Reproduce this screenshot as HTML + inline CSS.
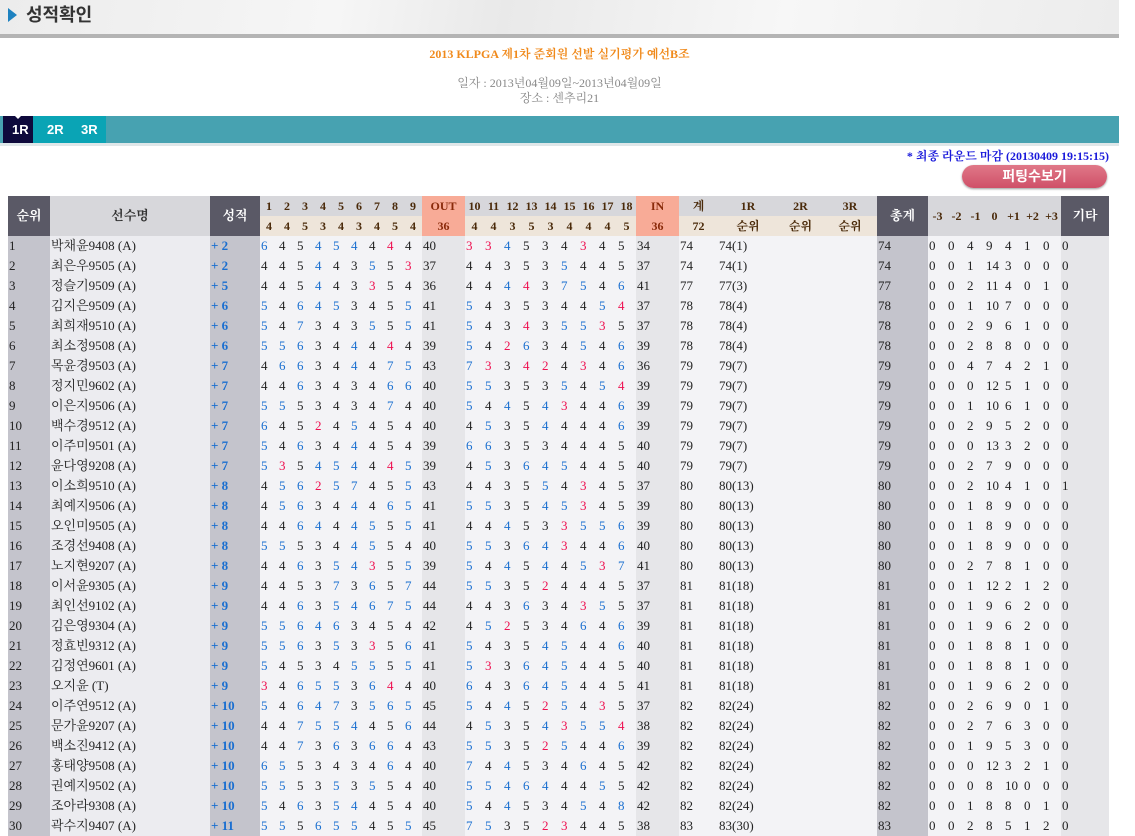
<!DOCTYPE html>
<html><head><meta charset="utf-8">
<style>
body{margin:0;width:1135px;height:836px;overflow:hidden;background:#fff;font-family:"Liberation Serif","Noto Serif CJK SC",serif;}
.top{position:absolute;left:0;top:0;width:1119px;height:34px;background:linear-gradient(100deg,#ececec 0%,#f6f6f6 30%,#e9e9e9 45%,#f7f7f7 70%,#ececec 100%);border-bottom:4px solid #b4b4b4;}
.top h1{position:absolute;left:26px;top:1px;margin:0;font:bold 18px "Liberation Sans","Noto Sans CJK KR",sans-serif;color:#333;}
.arrow{position:absolute;left:8px;top:8px;width:0;height:0;border-top:7px solid transparent;border-bottom:7px solid transparent;border-left:9px solid #1e82c0;}
.t1{position:absolute;left:0;width:1119px;top:45px;text-align:center;color:#f08a1c;font:bold 12px "Liberation Serif","Noto Serif CJK SC",serif;}
.t2{position:absolute;left:0;width:1119px;top:76px;text-align:center;color:#888;font:12px/15px "Liberation Serif","Noto Serif CJK SC",serif;}
.tabs{position:absolute;left:0;top:116px;width:1119px;height:27px;background:#47a2b1;border-bottom:3px solid #dfe7e9;}
.tabs .seg{position:absolute;left:33px;top:0;width:73px;height:27px;background:#0aa4b5;}
.tabs .on{position:absolute;left:3px;top:0;width:30px;height:27px;background:#0e0a3c;}
.tabs span{position:absolute;top:6px;color:#fff;font:bold 13px "Liberation Sans",sans-serif;}
.tabs .tri{position:absolute;left:14px;top:-1px;border-left:4px solid transparent;border-right:4px solid transparent;border-top:4px solid #fff;}
.note{position:absolute;right:26px;top:147px;color:#1a1adb;font:bold 12px "Liberation Serif","Noto Serif CJK SC",serif;}
.btn{position:absolute;left:962px;top:165px;width:145px;height:23px;border-radius:12px;background:linear-gradient(#e07888,#cf5068);box-shadow:0 1px 2px #999;color:#fff;text-align:center;font:bold 14px/23px "Liberation Sans","Noto Sans CJK KR",sans-serif;}
table{position:absolute;left:8px;top:196px;border-collapse:collapse;table-layout:fixed;width:1101px;font-size:13px;}
td,th{padding:0 0 0 1px;height:20px;white-space:nowrap;overflow:hidden;text-align:left;color:#222;line-height:18px;}
th{font-weight:bold;text-align:center;padding:0;color:#4a2a0a;font-size:12px;}
th.d{background:#5a5966;color:#fff;font-family:"Liberation Serif","Noto Serif CJK SC",serif;font-size:13px;}
th.g{background:#d7d7db;color:#333;font-family:"Liberation Serif","Noto Serif CJK SC",serif;font-size:13px;font-weight:bold;}
th.h{background:#d7d7db;}
th.p{background:#eee5da;}
th.o{background:#f8ab97;color:#8a2a0a;}
th.k{font-family:"Liberation Serif","Noto Serif CJK SC",serif;}
.c1{background:#c4c4cc}.c2{background:#ececf0}.c4{background:#f3f3f6}.c5{background:#e6e6e9}
td.s{color:#1a6fd0;font-weight:bold;font-family:"Liberation Serif",serif;}
td.n{font-family:"Liberation Serif","Noto Serif CJK SC",serif;}
.b{color:#1a6fd0}.r{color:#ee1050}
</style></head><body>
<div class="top"><div class="arrow"></div><h1>성적확인</h1></div>
<div class="t1">2013 KLPGA 제1차 준회원 선발 실기평가 예선B조</div>
<div class="t2">일자 : 2013년04월09일~2013년04월09일<br>장소 : 센추리21</div>
<div class="tabs"><div class="seg"></div><div class="on"></div><div class="tri"></div><span style="left:12px">1R</span><span style="left:47px">2R</span><span style="left:81px">3R</span></div>
<div class="note">* 최종 라운드 마감 (20130409 19:15:15)</div>
<div class="btn">퍼팅수보기</div>
<table>
<colgroup>
<col class="c1" style="width:42px"><col class="c2" style="width:160px"><col class="c1" style="width:50px">
<col class="c4" span="9" style="width:18px"><col class="c5" style="width:43px">
<col class="c4" span="9" style="width:19px"><col class="c5" style="width:43px">
<col class="c4" style="width:39px"><col class="c4" style="width:60px"><col class="c4" style="width:45px"><col class="c4" style="width:54px">
<col class="c1" style="width:51px"><col class="c4" span="7" style="width:19px"><col class="c5" style="width:48px">
</colgroup>
<tr><th class="d" rowspan="2">순위</th><th class="g" rowspan="2">선수명</th><th class="d" rowspan="2">성적</th>
<th class="h">1</th><th class="h">2</th><th class="h">3</th><th class="h">4</th><th class="h">5</th><th class="h">6</th><th class="h">7</th><th class="h">8</th><th class="h">9</th><th class="o">OUT</th>
<th class="h">10</th><th class="h">11</th><th class="h">12</th><th class="h">13</th><th class="h">14</th><th class="h">15</th><th class="h">16</th><th class="h">17</th><th class="h">18</th><th class="o">IN</th>
<th class="h k">계</th><th class="h">1R</th><th class="h">2R</th><th class="h">3R</th><th class="d" rowspan="2">총계</th>
<th class="h" rowspan="2">-3</th><th class="h" rowspan="2">-2</th><th class="h" rowspan="2">-1</th><th class="h" rowspan="2">0</th><th class="h" rowspan="2">+1</th><th class="h" rowspan="2">+2</th><th class="h" rowspan="2">+3</th><th class="d" rowspan="2">기타</th></tr>
<tr><th class="p">4</th><th class="p">4</th><th class="p">5</th><th class="p">3</th><th class="p">4</th><th class="p">3</th><th class="p">4</th><th class="p">5</th><th class="p">4</th><th class="o">36</th>
<th class="p">4</th><th class="p">4</th><th class="p">3</th><th class="p">5</th><th class="p">3</th><th class="p">4</th><th class="p">4</th><th class="p">4</th><th class="p">5</th><th class="o">36</th>
<th class="p">72</th><th class="p k">순위</th><th class="p k">순위</th><th class="p k">순위</th></tr>
<tr><td>1<td class=n>박채윤9408 (A)<td class=s>+ 2<td class=b>6<td>4<td>5<td class=b>4<td class=b>5<td class=b>4<td>4<td class=r>4<td>4<td>40<td class=r>3<td class=r>3<td class=b>4<td>5<td>3<td>4<td class=r>3<td>4<td>5<td>34<td>74<td>74(1)<td><td><td>74<td>0<td>0<td>4<td>9<td>4<td>1<td>0<td>0</tr>
<tr><td>2<td class=n>최은우9505 (A)<td class=s>+ 2<td>4<td>4<td>5<td class=b>4<td>4<td>3<td class=b>5<td>5<td class=r>3<td>37<td>4<td>4<td>3<td>5<td>3<td class=b>5<td>4<td>4<td>5<td>37<td>74<td>74(1)<td><td><td>74<td>0<td>0<td>1<td>14<td>3<td>0<td>0<td>0</tr>
<tr><td>3<td class=n>정슬기9509 (A)<td class=s>+ 5<td>4<td>4<td>5<td class=b>4<td>4<td>3<td class=r>3<td>5<td>4<td>36<td>4<td>4<td class=b>4<td class=r>4<td>3<td class=b>7<td class=b>5<td>4<td class=b>6<td>41<td>77<td>77(3)<td><td><td>77<td>0<td>0<td>2<td>11<td>4<td>0<td>1<td>0</tr>
<tr><td>4<td class=n>김지은9509 (A)<td class=s>+ 6<td class=b>5<td>4<td class=b>6<td class=b>4<td class=b>5<td>3<td>4<td>5<td class=b>5<td>41<td class=b>5<td>4<td>3<td>5<td>3<td>4<td>4<td class=b>5<td class=r>4<td>37<td>78<td>78(4)<td><td><td>78<td>0<td>0<td>1<td>10<td>7<td>0<td>0<td>0</tr>
<tr><td>5<td class=n>최희재9510 (A)<td class=s>+ 6<td class=b>5<td>4<td class=b>7<td>3<td>4<td>3<td class=b>5<td>5<td class=b>5<td>41<td class=b>5<td>4<td>3<td class=r>4<td>3<td class=b>5<td class=b>5<td class=r>3<td>5<td>37<td>78<td>78(4)<td><td><td>78<td>0<td>0<td>2<td>9<td>6<td>1<td>0<td>0</tr>
<tr><td>6<td class=n>최소정9508 (A)<td class=s>+ 6<td class=b>5<td class=b>5<td class=b>6<td>3<td>4<td class=b>4<td>4<td class=r>4<td>4<td>39<td class=b>5<td>4<td class=r>2<td class=b>6<td>3<td>4<td class=b>5<td>4<td class=b>6<td>39<td>78<td>78(4)<td><td><td>78<td>0<td>0<td>2<td>8<td>8<td>0<td>0<td>0</tr>
<tr><td>7<td class=n>목윤경9503 (A)<td class=s>+ 7<td>4<td class=b>6<td class=b>6<td>3<td>4<td class=b>4<td>4<td class=b>7<td class=b>5<td>43<td class=b>7<td class=r>3<td>3<td class=r>4<td class=r>2<td>4<td class=r>3<td>4<td class=b>6<td>36<td>79<td>79(7)<td><td><td>79<td>0<td>0<td>4<td>7<td>4<td>2<td>1<td>0</tr>
<tr><td>8<td class=n>정지민9602 (A)<td class=s>+ 7<td>4<td>4<td class=b>6<td>3<td>4<td>3<td>4<td class=b>6<td class=b>6<td>40<td class=b>5<td class=b>5<td>3<td>5<td>3<td class=b>5<td>4<td class=b>5<td class=r>4<td>39<td>79<td>79(7)<td><td><td>79<td>0<td>0<td>0<td>12<td>5<td>1<td>0<td>0</tr>
<tr><td>9<td class=n>이은지9506 (A)<td class=s>+ 7<td class=b>5<td class=b>5<td>5<td>3<td>4<td>3<td>4<td class=b>7<td>4<td>40<td class=b>5<td>4<td class=b>4<td>5<td class=b>4<td class=r>3<td>4<td>4<td class=b>6<td>39<td>79<td>79(7)<td><td><td>79<td>0<td>0<td>1<td>10<td>6<td>1<td>0<td>0</tr>
<tr><td>10<td class=n>백수경9512 (A)<td class=s>+ 7<td class=b>6<td>4<td>5<td class=r>2<td>4<td class=b>5<td>4<td>5<td>4<td>40<td>4<td class=b>5<td>3<td>5<td class=b>4<td>4<td>4<td>4<td class=b>6<td>39<td>79<td>79(7)<td><td><td>79<td>0<td>0<td>2<td>9<td>5<td>2<td>0<td>0</tr>
<tr><td>11<td class=n>이주미9501 (A)<td class=s>+ 7<td class=b>5<td>4<td class=b>6<td>3<td>4<td class=b>4<td>4<td>5<td>4<td>39<td class=b>6<td class=b>6<td>3<td>5<td>3<td>4<td>4<td>4<td>5<td>40<td>79<td>79(7)<td><td><td>79<td>0<td>0<td>0<td>13<td>3<td>2<td>0<td>0</tr>
<tr><td>12<td class=n>윤다영9208 (A)<td class=s>+ 7<td class=b>5<td class=r>3<td>5<td class=b>4<td class=b>5<td class=b>4<td>4<td class=r>4<td class=b>5<td>39<td>4<td class=b>5<td>3<td class=b>6<td class=b>4<td class=b>5<td>4<td>4<td>5<td>40<td>79<td>79(7)<td><td><td>79<td>0<td>0<td>2<td>7<td>9<td>0<td>0<td>0</tr>
<tr><td>13<td class=n>이소희9510 (A)<td class=s>+ 8<td>4<td class=b>5<td class=b>6<td class=r>2<td class=b>5<td class=b>7<td>4<td>5<td class=b>5<td>43<td>4<td>4<td>3<td>5<td class=b>5<td>4<td class=r>3<td>4<td>5<td>37<td>80<td>80(13)<td><td><td>80<td>0<td>0<td>2<td>10<td>4<td>1<td>0<td>1</tr>
<tr><td>14<td class=n>최예지9506 (A)<td class=s>+ 8<td>4<td class=b>5<td class=b>6<td>3<td>4<td class=b>4<td>4<td class=b>6<td class=b>5<td>41<td class=b>5<td class=b>5<td>3<td>5<td class=b>4<td class=b>5<td class=r>3<td>4<td>5<td>39<td>80<td>80(13)<td><td><td>80<td>0<td>0<td>1<td>8<td>9<td>0<td>0<td>0</tr>
<tr><td>15<td class=n>오인미9505 (A)<td class=s>+ 8<td>4<td>4<td class=b>6<td class=b>4<td>4<td class=b>4<td class=b>5<td>5<td class=b>5<td>41<td>4<td>4<td class=b>4<td>5<td>3<td class=r>3<td class=b>5<td class=b>5<td class=b>6<td>39<td>80<td>80(13)<td><td><td>80<td>0<td>0<td>1<td>8<td>9<td>0<td>0<td>0</tr>
<tr><td>16<td class=n>조경선9408 (A)<td class=s>+ 8<td class=b>5<td class=b>5<td>5<td>3<td>4<td class=b>4<td class=b>5<td>5<td>4<td>40<td class=b>5<td class=b>5<td>3<td class=b>6<td class=b>4<td class=r>3<td>4<td>4<td class=b>6<td>40<td>80<td>80(13)<td><td><td>80<td>0<td>0<td>1<td>8<td>9<td>0<td>0<td>0</tr>
<tr><td>17<td class=n>노지현9207 (A)<td class=s>+ 8<td>4<td>4<td class=b>6<td>3<td class=b>5<td class=b>4<td class=r>3<td>5<td class=b>5<td>39<td class=b>5<td>4<td class=b>4<td>5<td class=b>4<td>4<td class=b>5<td class=r>3<td class=b>7<td>41<td>80<td>80(13)<td><td><td>80<td>0<td>0<td>2<td>7<td>8<td>1<td>0<td>0</tr>
<tr><td>18<td class=n>이서윤9305 (A)<td class=s>+ 9<td>4<td>4<td>5<td>3<td class=b>7<td>3<td class=b>6<td>5<td class=b>7<td>44<td class=b>5<td class=b>5<td>3<td>5<td class=r>2<td>4<td>4<td>4<td>5<td>37<td>81<td>81(18)<td><td><td>81<td>0<td>0<td>1<td>12<td>2<td>1<td>2<td>0</tr>
<tr><td>19<td class=n>최인선9102 (A)<td class=s>+ 9<td>4<td>4<td class=b>6<td>3<td class=b>5<td class=b>4<td class=b>6<td class=b>7<td class=b>5<td>44<td>4<td>4<td>3<td class=b>6<td>3<td>4<td class=r>3<td class=b>5<td>5<td>37<td>81<td>81(18)<td><td><td>81<td>0<td>0<td>1<td>9<td>6<td>2<td>0<td>0</tr>
<tr><td>20<td class=n>김은영9304 (A)<td class=s>+ 9<td class=b>5<td class=b>5<td class=b>6<td class=b>4<td class=b>6<td>3<td>4<td>5<td>4<td>42<td>4<td class=b>5<td class=r>2<td>5<td>3<td>4<td class=b>6<td>4<td class=b>6<td>39<td>81<td>81(18)<td><td><td>81<td>0<td>0<td>1<td>9<td>6<td>2<td>0<td>0</tr>
<tr><td>21<td class=n>정효빈9312 (A)<td class=s>+ 9<td class=b>5<td class=b>5<td class=b>6<td>3<td class=b>5<td>3<td class=r>3<td>5<td class=b>6<td>41<td class=b>5<td>4<td>3<td>5<td class=b>4<td class=b>5<td>4<td>4<td class=b>6<td>40<td>81<td>81(18)<td><td><td>81<td>0<td>0<td>1<td>8<td>8<td>1<td>0<td>0</tr>
<tr><td>22<td class=n>김정연9601 (A)<td class=s>+ 9<td class=b>5<td>4<td>5<td>3<td>4<td class=b>5<td class=b>5<td>5<td class=b>5<td>41<td class=b>5<td class=r>3<td>3<td class=b>6<td class=b>4<td class=b>5<td>4<td>4<td>5<td>40<td>81<td>81(18)<td><td><td>81<td>0<td>0<td>1<td>8<td>8<td>1<td>0<td>0</tr>
<tr><td>23<td class=n>오지윤 (T)<td class=s>+ 9<td class=r>3<td>4<td class=b>6<td class=b>5<td class=b>5<td>3<td class=b>6<td class=r>4<td>4<td>40<td class=b>6<td>4<td>3<td class=b>6<td class=b>4<td class=b>5<td>4<td>4<td>5<td>41<td>81<td>81(18)<td><td><td>81<td>0<td>0<td>1<td>9<td>6<td>2<td>0<td>0</tr>
<tr><td>24<td class=n>이주연9512 (A)<td class=s>+ 10<td class=b>5<td>4<td class=b>6<td class=b>4<td class=b>7<td>3<td class=b>5<td class=b>6<td class=b>5<td>45<td class=b>5<td>4<td class=b>4<td>5<td class=r>2<td class=b>5<td>4<td class=r>3<td>5<td>37<td>82<td>82(24)<td><td><td>82<td>0<td>0<td>2<td>6<td>9<td>0<td>1<td>0</tr>
<tr><td>25<td class=n>문가윤9207 (A)<td class=s>+ 10<td>4<td>4<td class=b>7<td class=b>5<td class=b>5<td class=b>4<td>4<td>5<td class=b>6<td>44<td>4<td class=b>5<td>3<td>5<td class=b>4<td class=r>3<td class=b>5<td class=b>5<td class=r>4<td>38<td>82<td>82(24)<td><td><td>82<td>0<td>0<td>2<td>7<td>6<td>3<td>0<td>0</tr>
<tr><td>26<td class=n>백소진9412 (A)<td class=s>+ 10<td>4<td>4<td class=b>7<td>3<td class=b>6<td>3<td class=b>6<td class=b>6<td>4<td>43<td class=b>5<td class=b>5<td>3<td>5<td class=r>2<td class=b>5<td>4<td>4<td class=b>6<td>39<td>82<td>82(24)<td><td><td>82<td>0<td>0<td>1<td>9<td>5<td>3<td>0<td>0</tr>
<tr><td>27<td class=n>홍태양9508 (A)<td class=s>+ 10<td class=b>6<td class=b>5<td>5<td>3<td>4<td>3<td>4<td class=b>6<td>4<td>40<td class=b>7<td>4<td class=b>4<td>5<td>3<td>4<td class=b>6<td>4<td>5<td>42<td>82<td>82(24)<td><td><td>82<td>0<td>0<td>0<td>12<td>3<td>2<td>1<td>0</tr>
<tr><td>28<td class=n>권예지9502 (A)<td class=s>+ 10<td class=b>5<td class=b>5<td>5<td>3<td class=b>5<td>3<td class=b>5<td>5<td>4<td>40<td class=b>5<td class=b>5<td class=b>4<td class=b>6<td class=b>4<td>4<td>4<td class=b>5<td>5<td>42<td>82<td>82(24)<td><td><td>82<td>0<td>0<td>0<td>8<td>10<td>0<td>0<td>0</tr>
<tr><td>29<td class=n>조아라9308 (A)<td class=s>+ 10<td class=b>5<td>4<td class=b>6<td>3<td class=b>5<td class=b>4<td>4<td>5<td>4<td>40<td class=b>5<td>4<td class=b>4<td>5<td>3<td>4<td class=b>5<td>4<td class=b>8<td>42<td>82<td>82(24)<td><td><td>82<td>0<td>0<td>1<td>8<td>8<td>0<td>1<td>0</tr>
<tr><td>30<td class=n>곽수지9407 (A)<td class=s>+ 11<td class=b>5<td class=b>5<td>5<td class=b>6<td class=b>5<td class=b>5<td>4<td>5<td class=b>5<td>45<td class=b>7<td class=b>5<td>3<td>5<td class=r>2<td class=r>3<td>4<td>4<td>5<td>38<td>83<td>83(30)<td><td><td>83<td>0<td>0<td>2<td>8<td>5<td>1<td>2<td>0</tr>
</table>
</body></html>
